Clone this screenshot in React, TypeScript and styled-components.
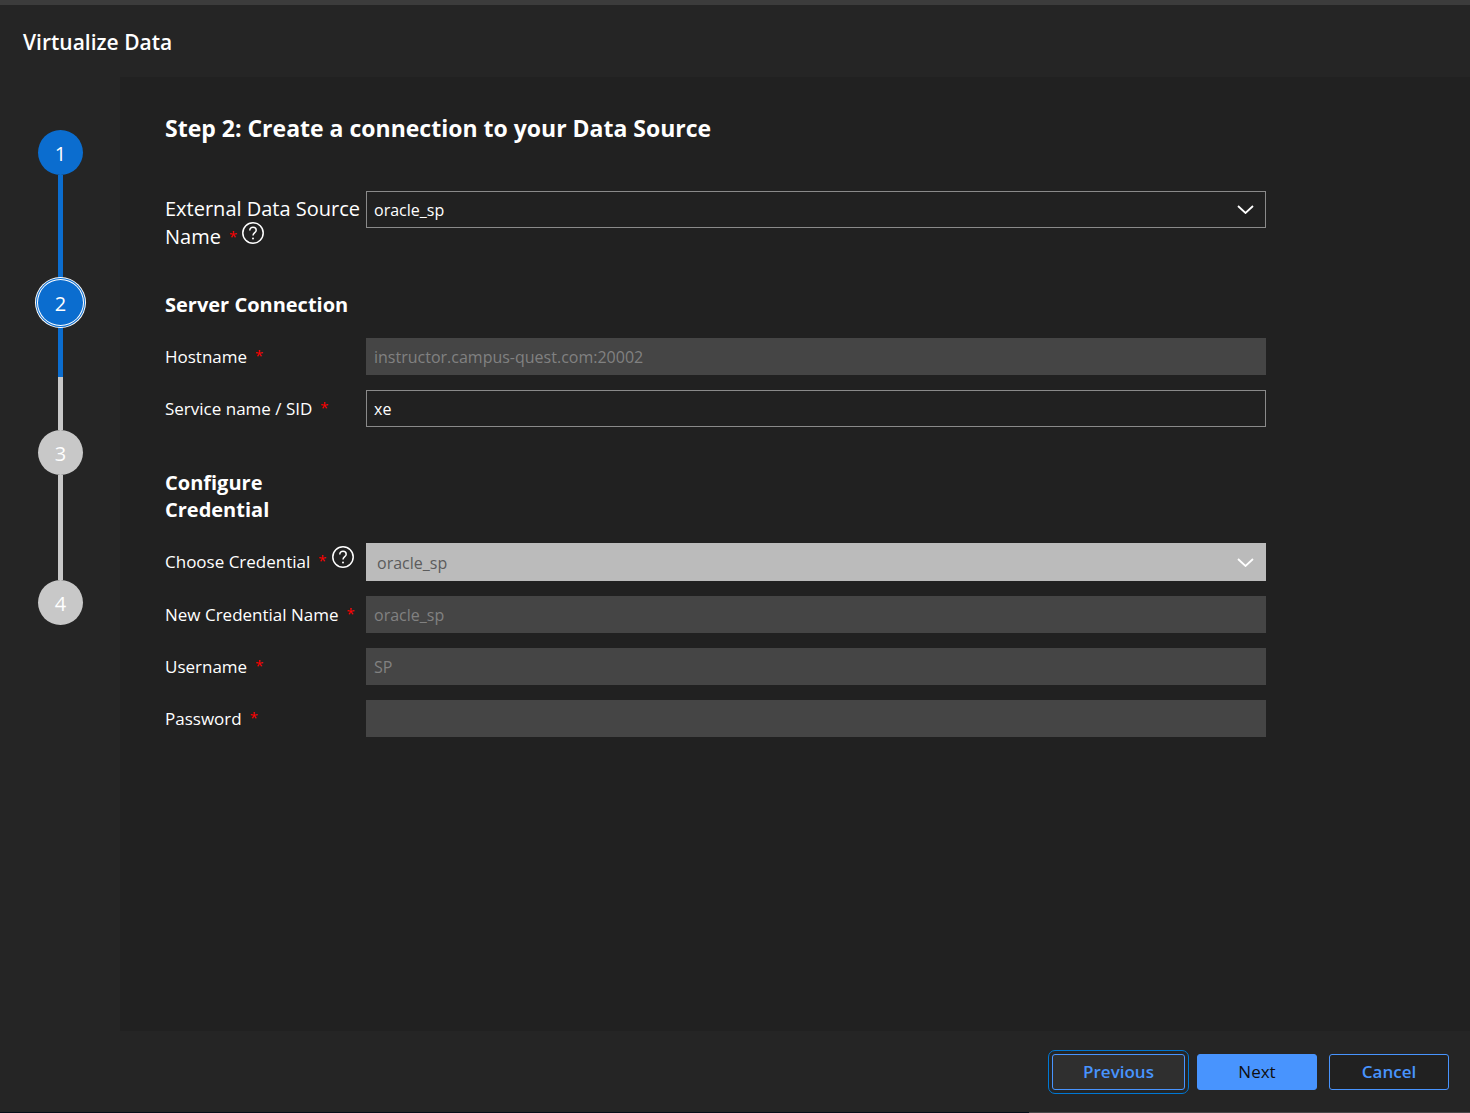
import React from "react";
import styled, { createGlobalStyle } from "styled-components";

const GlobalStyle = createGlobalStyle`
  *, *::before, *::after { box-sizing: border-box; }
  body {
    margin: 0;
    background: #252525;
    color: #ffffff;
    font-family: "Segoe UI", "Open Sans", "Noto Sans", sans-serif;
    font-size: 17px;
  }
`;

const Dialog = styled.div`
  display: flex;
  flex-direction: column;
  min-height: 100vh;
  background: #252525;
  border-top: 5px solid #3c3c3c;
`;

const BottomEdge = styled.div`
  height: 1px;
  background: linear-gradient(90deg, #050d18 70%, #48484a 70%);
`;

const Header = styled.header`
  display: flex;
  align-items: center;
  height: 72px;
  padding: 2px 23px 0;
`;

const Title = styled.h1`
  margin: 0;
  font-size: 21px;
  line-height: 28px;
  font-weight: 600;
`;

const Body = styled.div`
  display: grid;
  grid-template-columns: 120px 1fr;
  flex: 1;
`;

const Steps = styled.ol`
  display: flex;
  flex-direction: column;
  align-items: center;
  margin: 0;
  padding: 53px 0 0;
  list-style: none;
`;

const Step = styled.li`
  display: flex;
  flex-direction: column;
  align-items: center;
`;

const Bubble = styled.span<{ $reached: boolean; $current: boolean }>`
  display: flex;
  align-items: center;
  justify-content: center;
  width: 45px;
  height: 45px;
  padding: 2px 0 0 1px;
  border-radius: 50%;
  background: ${(p) => (p.$reached ? "#0b6dcf" : "#c8c8c8")};
  box-shadow: ${(p) =>
    p.$current ? "0 0 0 1px #fff, 0 0 0 2px #0b6dcf, 0 0 0 3px #fff" : "none"};
  z-index: 1;
  font-size: 20px;
  line-height: 24px;
`;

const Connector = styled.span<{ $from: string; $to: string }>`
  width: 5px;
  height: 105px;
  background: linear-gradient(${(p) => p.$from} 50%, ${(p) => p.$to} 50%);
`;

const Content = styled.main`
  padding: 32px 45px;
  background: #212121;
`;

const Form = styled.form`
  max-width: 1101px;
`;

const Heading = styled.h2`
  margin: 0 0 44px;
  font-size: 23px;
  line-height: 38px;
  font-weight: 700;
`;

const Section = styled.fieldset`
  display: flex;
  flex-direction: column;
  gap: 15px;
  margin: 0 0 42px;
  padding: 0;
  border: 0;
  min-width: 0;

  &:first-of-type {
    margin-bottom: 40px;
  }
`;

const SectionTitle = styled.h3`
  margin: 0 0 5px;
  font-size: 20px;
  line-height: 27px;
  font-weight: 700;
`;

const Row = styled.div`
  display: grid;
  grid-template-columns: 201px 1fr;
  align-items: start;
`;

const LabelCell = styled.div<{ $large?: boolean }>`
  padding: ${(p) => (p.$large ? "4px 0 0" : "7px 0 0")};
  font-size: ${(p) => (p.$large ? "20px" : "17px")};
  line-height: ${(p) => (p.$large ? "28px" : "24px")};
  white-space: nowrap;
`;

const Required = styled.span`
  margin-left: 8px;
  color: #ff0000;
  font-size: 15px;
  line-height: 1;
  vertical-align: 2px;
`;

const HelpButton = styled.button`
  width: 22px;
  height: 22px;
  margin: -4px 0 0 5px;
  padding: 0;
  border: 0;
  background: none;
  color: #ffffff;
  line-height: 0;
  vertical-align: 0;
`;

const TextInput = styled.input`
  width: 100%;
  height: 37px;
  padding: 1px 7px 0;
  border: 1px solid #8a8a8a;
  border-radius: 0;
  background: #212121;
  color: #ffffff;
  font: inherit;
  font-size: 16px;

  &:disabled {
    border-color: #454545;
    background: #454545;
    color: #818181;
  }
`;

const SelectBox = styled.div`
  display: grid;
  align-items: center;

  & > * {
    grid-area: 1 / 1;
  }
`;

const Select = styled.select`
  width: 100%;
  height: 37px;
  padding: 0 36px 0 7px;
  border: 1px solid #8a8a8a;
  border-radius: 0;
  background: #212121;
  color: #ffffff;
  font: inherit;
  font-size: 16px;
  appearance: none;

  &:disabled {
    height: 38px;
    padding-top: 2px;
    padding-left: 10px;
    border-color: #bbbbbb;
    background: #bbbbbb;
    color: #5c5c5c;
    opacity: 1;
  }
`;

const Chevron = styled.svg`
  justify-self: end;
  margin-right: 12px;
  pointer-events: none;
`;

const Footer = styled.footer`
  display: flex;
  justify-content: flex-end;
  gap: 12px;
  padding: 23px 21px 22px;
`;

const Button = styled.button<{ $primary?: boolean; $focused?: boolean }>`
  min-width: ${(p) => (p.$focused ? "133px" : "120px")};
  height: 36px;
  padding: 0 20px;
  border: 1px solid #4894fe;
  border-radius: 3px;
  background: ${(p) => (p.$primary ? "#4894fe" : p.$focused ? "#2f2f2f" : "#212121")};
  color: ${(p) => (p.$primary ? "#101010" : "#4894fe")};
  outline: ${(p) => (p.$focused ? "1px solid #0078d4" : "none")};
  outline-offset: 3px;
  font: inherit;
  font-weight: ${(p) => (p.$primary ? 500 : 600)};
  line-height: 24px;
`;

const BLUE = "#0b6dcf";
const GREY = "#c8c8c8";
const CURRENT_STEP = 2;

function StepList() {
  return (
    <Steps aria-label="Steps">
      {[1, 2, 3, 4].map((n) => (
        <Step key={n} aria-current={n === CURRENT_STEP ? "step" : undefined}>
          <Bubble $reached={n <= CURRENT_STEP} $current={n === CURRENT_STEP}>
            {n}
          </Bubble>
          {n < 4 && (
            <Connector
              $from={n <= CURRENT_STEP ? BLUE : GREY}
              $to={n < CURRENT_STEP ? BLUE : GREY}
            />
          )}
        </Step>
      ))}
    </Steps>
  );
}

function Help({ about }: { about: string }) {
  return (
    <HelpButton type="button" aria-label={`Help: ${about}`}>
      <svg width="22" height="22" viewBox="0 0 22 22" fill="none" stroke="currentColor">
        <circle cx="11" cy="11" r="10.2" strokeWidth="1.5" />
        <path d="M7.8 8.4C7.8 6.4 9.2 5.2 11 5.2S14.2 6.4 14.2 8.2C14.2 10.6 11 10.8 11 13.6" strokeWidth="1.5" />
        <circle cx="11" cy="16.4" r="1" fill="currentColor" stroke="none" />
      </svg>
    </HelpButton>
  );
}

interface FieldProps {
  id: string;
  label: React.ReactNode;
  help?: string;
  large?: boolean;
  children: React.ReactNode;
}

function Field({ id, label, help, large, children }: FieldProps) {
  return (
    <Row>
      <LabelCell $large={large}>
        <label htmlFor={id}>
          {label}
          <Required>*</Required>
        </label>
        {help && <Help about={help} />}
      </LabelCell>
      {children}
    </Row>
  );
}

interface DropDownProps {
  id: string;
  value: string;
  disabled?: boolean;
}

function DropDown({ id, value, disabled }: DropDownProps) {
  return (
    <SelectBox>
      <Select id={id} defaultValue={value} disabled={disabled}>
        <option>{value}</option>
      </Select>
      <Chevron width="17" height="9" viewBox="0 0 17 9" fill="none" aria-hidden="true">
        <path d="M1 1L8.5 8L16 1" stroke="#ffffff" strokeWidth="1.8" />
      </Chevron>
    </SelectBox>
  );
}

export default function App() {
  return (
    <Dialog>
      <GlobalStyle />
      <Header>
        <Title>Virtualize Data</Title>
      </Header>
      <Body>
        <StepList />
        <Content>
          <Form>
            <Heading>Step 2: Create a connection to your Data Source</Heading>
            <Section>
              <Field
                id="source"
                large
                help="External Data Source Name"
                label={
                  <>
                    External Data Source
                    <br />
                    Name
                  </>
                }
              >
                <DropDown id="source" value="oracle_sp" />
              </Field>
            </Section>
            <Section>
              <SectionTitle>Server Connection</SectionTitle>
              <Field id="host" label="Hostname">
                <TextInput id="host" defaultValue="instructor.campus-quest.com:20002" disabled />
              </Field>
              <Field id="service" label="Service name / SID">
                <TextInput id="service" defaultValue="xe" />
              </Field>
            </Section>
            <Section>
              <SectionTitle>
                Configure
                <br />
                Credential
              </SectionTitle>
              <Field id="credential" label="Choose Credential" help="Choose Credential">
                <DropDown id="credential" value="oracle_sp" disabled />
              </Field>
              <Field id="credential-name" label="New Credential Name">
                <TextInput id="credential-name" defaultValue="oracle_sp" disabled />
              </Field>
              <Field id="user" label="Username">
                <TextInput id="user" defaultValue="SP" disabled />
              </Field>
              <Field id="password" label="Password">
                <TextInput id="password" type="password" disabled />
              </Field>
            </Section>
          </Form>
        </Content>
      </Body>
      <Footer>
        <Button type="button" $focused autoFocus>
          Previous
        </Button>
        <Button type="button" $primary>
          Next
        </Button>
        <Button type="button">Cancel</Button>
      </Footer>
      <BottomEdge />
    </Dialog>
  );
}
